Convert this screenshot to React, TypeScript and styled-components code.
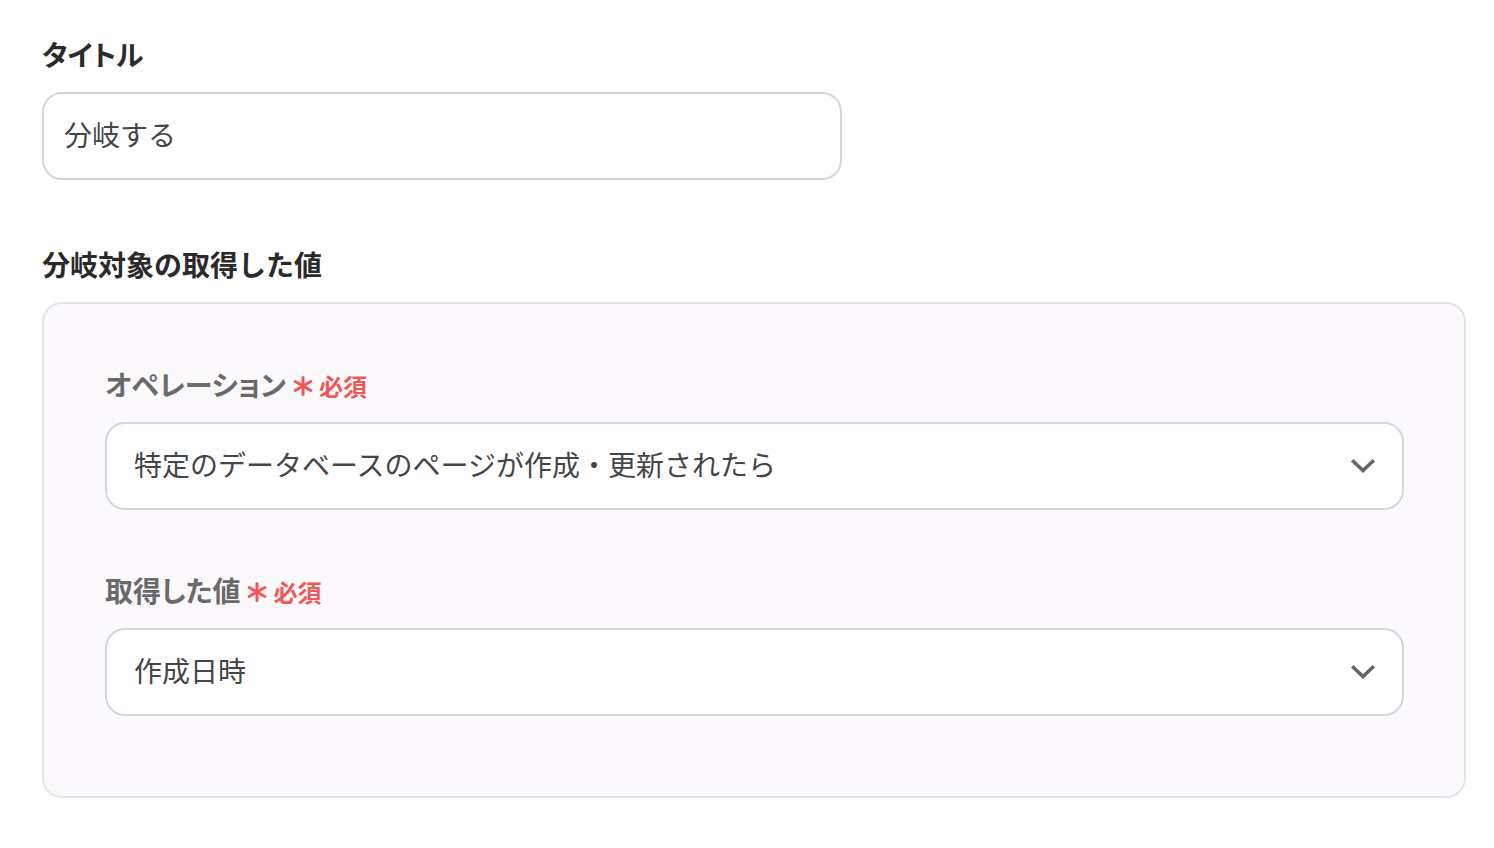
import React, { FC } from "react";
import styled, { createGlobalStyle } from "styled-components";

const GlobalStyle = createGlobalStyle`
  body {
    margin: 0;
    background: #ffffff;
    font-family: "Noto Sans CJK JP", "Noto Sans", sans-serif;
  }
`;

const Page = styled.div`
  padding: 34px 28px 40px 42px;
  display: flex;
  flex-direction: column;
`;

const FieldLabel = styled.div<{ $muted?: boolean; $palt?: boolean }>`
  display: flex;
  align-items: center;
  height: 40px;
  font-size: 28px;
  font-weight: 700;
  line-height: 40px;
  color: ${(p) => (p.$muted ? "#6a6a6a" : "#2a2a2a")};
  font-feature-settings: ${(p) => (p.$palt ? '"palt"' : "normal")};
`;

const Required = styled.span`
  display: inline-flex;
  align-items: center;
  margin-left: 7px;
  color: #f25757;
  font-size: 24px;
  font-weight: 700;
  gap: 6px;
  padding-top: 4px;
  font-feature-settings: normal;
`;

const TextBox = styled.div<{ $width?: string }>`
  box-sizing: border-box;
  width: ${(p) => p.$width ?? "100%"};
  height: 88px;
  margin-top: 18px;
  border: 2px solid #d3d6de;
  border-radius: 20px;
  background: #ffffff;
  display: flex;
  align-items: center;
  padding: 0 26px 4px 20px;
  font-size: 28px;
  color: #454545;
`;

const SelectBox = styled(TextBox)`
  justify-content: space-between;
  padding-left: 27px;
`;

const Section = styled.div`
  margin-top: 64px;
  display: flex;
  flex-direction: column;
`;

const Panel = styled.div`
  box-sizing: border-box;
  width: 1424px;
  margin-top: 18px;
  padding: 60px 60px 80px 61px;
  border: 2px solid #e6e4e9;
  border-radius: 20px;
  background: #fbf9fc;
  display: flex;
  flex-direction: column;
`;

const PanelField = styled.div<{ $first?: boolean }>`
  display: flex;
  flex-direction: column;
  margin-top: ${(p) => (p.$first ? "0" : "60px")};
`;

const Chevron: FC = () => (
  <svg width="26" height="16" viewBox="0 0 26 16" fill="none" style={{ marginBottom: -4 }}>
    <path d="M3.5 3.5 L13 12.5 L22.5 3.5" stroke="#666666" strokeWidth="3.6" strokeLinecap="square" strokeLinejoin="miter" />
  </svg>
);

const Star: FC = () => (
  <svg width="20" height="20" viewBox="0 0 20 20">
    <g stroke="#f25757" strokeWidth="3" strokeLinecap="round">
      <line x1="10" y1="1.5" x2="10" y2="18.5" />
      <line x1="2.2" y1="5.5" x2="17.8" y2="14.5" />
      <line x1="2.2" y1="14.5" x2="17.8" y2="5.5" />
    </g>
  </svg>
);

const App: FC = () => {
  return (
    <>
      <GlobalStyle />
      <Page>
        <FieldLabel $palt>タイトル</FieldLabel>
        <TextBox $width="800px">分岐する</TextBox>

        <Section>
          <FieldLabel>分岐対象の取得した値</FieldLabel>
          <Panel>
            <PanelField $first>
              <FieldLabel $muted $palt>
                オペレーション
                <Required>
                  <Star />
                  必須
                </Required>
              </FieldLabel>
              <SelectBox>
                特定のデータベースのページが作成・更新されたら
                <Chevron />
              </SelectBox>
            </PanelField>
            <PanelField>
              <FieldLabel $muted $palt>
                取得した値
                <Required>
                  <Star />
                  必須
                </Required>
              </FieldLabel>
              <SelectBox>
                作成日時
                <Chevron />
              </SelectBox>
            </PanelField>
          </Panel>
        </Section>
      </Page>
    </>
  );
};

export default App;
